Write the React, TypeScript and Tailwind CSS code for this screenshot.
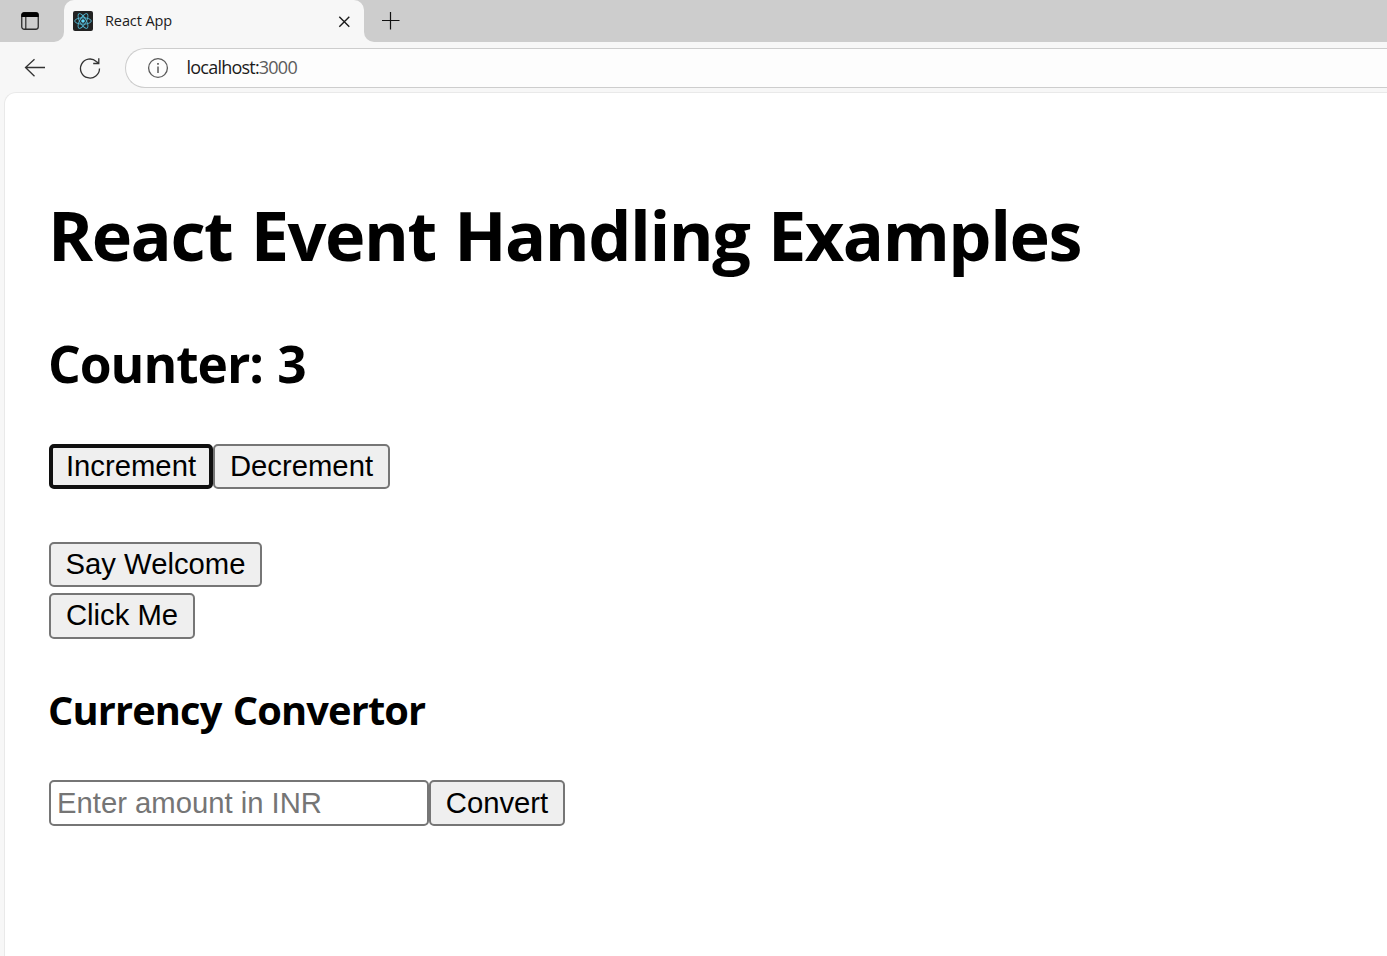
import { useState } from 'react';

const control =
  "rounded-[5px] text-[29.25px] leading-[34px] text-black font-['Liberation_Sans',Arial,sans-serif]";
const button = `${control} flex items-center justify-center whitespace-nowrap bg-[#efefef]`;
const heading = "whitespace-nowrap font-bold text-black font-['Open_Sans','Noto_Sans',sans-serif]";

function ReactLogo() {
  return (
    <svg className="size-5 shrink-0" viewBox="0 0 20 20" fill="none">
      <rect width="20" height="20" rx="2" fill="#222222" />
      <g stroke="#53b9d5" strokeWidth="0.9">
        <ellipse cx="10" cy="10" rx="8.3" ry="3.2" />
        <ellipse cx="10" cy="10" rx="8.3" ry="3.2" transform="rotate(60 10 10)" />
        <ellipse cx="10" cy="10" rx="8.3" ry="3.2" transform="rotate(120 10 10)" />
      </g>
      <circle cx="10" cy="10" r="1.8" fill="#61dafb" />
    </svg>
  );
}

function TabStrip() {
  return (
    <div className="flex h-[42px] bg-[#cdcdcd]">
      <div className="flex w-16 shrink-0 bg-[#f7f7f7]">
        <div className="flex h-full w-full items-center rounded-br-[10px] bg-[#cdcdcd] pl-[21px]">
          <svg className="h-[18px] w-[18px]" viewBox="0 0 18 18" fill="none">
            <rect x="0.75" y="0.75" width="16.5" height="16.5" rx="2.5" stroke="#2b2b2b" strokeWidth="1.3" />
            <path d="M0.3 5V3.2a3 3 0 0 1 3-3h11.4a3 3 0 0 1 3 3V5z" fill="#000" />
            <path d="M4.8 5v12" stroke="#2b2b2b" strokeWidth="1.2" />
          </svg>
        </div>
      </div>
      <div className="flex w-[300px] shrink-0 items-center rounded-t-[10px] bg-[#f7f7f7] pl-[9px] pr-[13px]">
        <ReactLogo />
        <span className="ml-3 flex-1 whitespace-nowrap font-['Open_Sans','Noto_Sans',sans-serif] text-[14.5px] leading-5 tracking-[-0.1px] text-[#1b1b1b]">
          React App
        </span>
        <svg className="h-[14px] w-[14px]" viewBox="0 0 14 14" fill="none">
          <path d="M2.3 2.8l10 10M12.3 2.8l-10 10" stroke="#1b1b1b" strokeWidth="1.4" />
        </svg>
      </div>
      <div className="flex flex-1 bg-[#f7f7f7]">
        <div className="flex flex-1 items-center rounded-bl-[10px] bg-[#cdcdcd] pl-[18px]">
          <svg className="h-[18px] w-[18px]" viewBox="0 0 18 18" fill="none">
            <path d="M0 8.5h17.5M8.5 0v17.5" stroke="#111" strokeWidth="1.2" />
          </svg>
        </div>
      </div>
    </div>
  );
}

function Toolbar() {
  return (
    <div className="flex h-[50px] pt-[6px]">
      <svg className="ml-6 mt-[10px] h-5 w-[22px] shrink-0" viewBox="0 0 22 20" fill="none" stroke="#333" strokeWidth="1.3">
        <path d="M10.5 1.2L1.5 9.5l9 8.8M1.5 9.5H21" />
      </svg>
      <svg className="ml-[33px] mt-[9px] size-[22px] shrink-0" viewBox="0 0 22 22" fill="none" stroke="#333" strokeWidth="1.3">
        <path d="M20.5 11.5a9.5 9.5 0 1 1-3.2-7.1L19.8 6.3M19.8 1.2v5.3h-5.6" />
      </svg>
      <div className="ml-6 flex h-10 flex-1 items-center rounded-l-full border border-r-0 border-[#cdcdcd] bg-[#fdfdfd] pl-[21px]">
        <svg className="size-[22px] shrink-0" viewBox="0 0 22 22" fill="none" stroke="#5a5a5a">
          <circle cx="11" cy="11" r="9.4" strokeWidth="1.3" />
          <path d="M11 9.5V16" strokeWidth="1.5" />
          <path d="M11 6v1.8" strokeWidth="1.7" />
        </svg>
        <span className="mb-[2px] ml-[17.5px] whitespace-nowrap font-['Open_Sans','Noto_Sans',sans-serif] text-[18px] leading-6 tracking-[-0.78px] text-[#1b1b1b]">
          localhost:<span className="text-[#5c5c5c]">3000</span>
        </span>
      </div>
    </div>
  );
}

export default function App() {
  const [count, setCount] = useState(3);
  const [amount, setAmount] = useState('');

  return (
    <div className="flex h-[956px] w-[1387px] flex-col overflow-hidden bg-[#f7f7f7]">
      <TabStrip />
      <Toolbar />
      <main className="ml-1 flex flex-1 flex-col items-start rounded-tl-[12px] border-l border-t border-[#e9e9e9] bg-white pl-11">
        <h1 className={`${heading} -ml-px mt-[95px] h-[94px] text-[68.4px] leading-[94px] tracking-[-1.48px] [word-spacing:2.2px]`}>
          React Event Handling Examples
        </h1>
        <h2 className={`${heading} -ml-px mt-[46px] h-[70px] text-[51.5px] leading-[70px] tracking-[-1.05px] [word-spacing:2px]`}>
          Counter: {count}
        </h2>
        <div className="mt-[46px] flex">
          <button
            className={`${button} h-[45px] w-[164px] border-4 border-[#101010] pb-[2px]`}
            onClick={() => setCount(count + 1)}
          >
            Increment
          </button>
          <button
            className={`${button} h-[45px] w-[177px] border-2 border-[#767676] pb-[2px]`}
            onClick={() => setCount(count - 1)}
          >
            Decrement
          </button>
        </div>
        <button className={`${button} mt-[53px] h-[45px] w-[213px] border-2 border-[#767676] pb-[2px]`}>
          Say Welcome
        </button>
        <button className={`${button} mt-[6px] h-[46px] w-[146px] border-2 border-[#767676] pb-[2px]`}>
          Click Me
        </button>
        <h3 className={`${heading} -ml-px mt-[44px] h-[54px] text-[39.8px] leading-[54px] tracking-[-0.88px] [word-spacing:2px]`}>
          Currency Convertor
        </h3>
        <div className="mt-[43px] flex">
          <input
            className={`${control} h-[46px] w-[380px] border-2 border-[#767676] bg-white px-[6px] outline-none placeholder:text-[#757575]`}
            placeholder="Enter amount in INR"
            value={amount}
            onChange={(e) => setAmount(e.target.value)}
          />
          <button className={`${button} h-[46px] w-[136px] border-2 border-[#767676]`}>Convert</button>
        </div>
      </main>
    </div>
  );
}
